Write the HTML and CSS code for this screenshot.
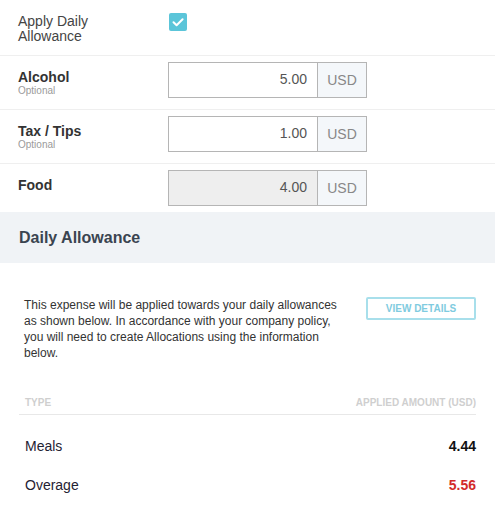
FILE: index.html
```html
<!DOCTYPE html>
<html lang="en">
<head>
<meta charset="utf-8">
<title>Daily Allowance</title>
<link rel="stylesheet" href="styles.css">
</head>
<body>
<div class="form">
  <div class="row row-check">
    <div class="lbl lbl-plain">Apply Daily<br>Allowance</div>
    <span class="checkbox">
      <svg width="18" height="18" viewBox="0 0 18 18"><rect x="0" y="0" width="18" height="18" rx="2" fill="#5bc5d9"/><polyline points="4.5,9.2 7.6,12.2 13.6,6.2" fill="none" stroke="#fff" stroke-width="2" stroke-linecap="round" stroke-linejoin="round"/></svg>
    </span>
  </div>
  <div class="row">
    <div class="lbl"><div class="lbl-title">Alcohol</div><div class="lbl-sub">Optional</div></div>
    <div class="money"><div class="amount">5.00</div><div class="cur">USD</div></div>
  </div>
  <div class="row">
    <div class="lbl"><div class="lbl-title">Tax / Tips</div><div class="lbl-sub">Optional</div></div>
    <div class="money"><div class="amount">1.00</div><div class="cur">USD</div></div>
  </div>
  <div class="row row-last">
    <div class="lbl"><div class="lbl-title">Food</div></div>
    <div class="money"><div class="amount amount-disabled">4.00</div><div class="cur">USD</div></div>
  </div>
</div>
<div class="section-head">Daily Allowance</div>
<div class="section-body">
  <div class="intro">
    <p class="intro-text">This expense will be applied towards your daily allowances as shown below. In accordance with your company policy, you will need to create Allocations using the information below.</p>
    <button class="btn-details">VIEW DETAILS</button>
  </div>
  <div class="alloc">
    <div class="alloc-head">
      <span>TYPE</span>
      <span>APPLIED AMOUNT (USD)</span>
    </div>
    <div class="alloc-row">
      <span class="alloc-type">Meals</span>
      <span class="alloc-val">4.44</span>
    </div>
    <div class="alloc-row">
      <span class="alloc-type">Overage</span>
      <span class="alloc-val alloc-over">5.56</span>
    </div>
  </div>
</div>
</body>
</html>
```
FILE: styles.css
```css
* { box-sizing: border-box; }
html, body { margin: 0; padding: 0; background: #fff; }
body {
  font-family: "Liberation Sans", Arial, sans-serif;
  color: #333;
  width: 495px;
}
.row {
  display: flex;
  align-items: flex-start;
  height: 54px;
  padding-top: 6px;
  border-bottom: 1px solid #efefef;
}
.row-check {
  height: 56px;
  padding-top: 13px;
}
.row-last {
  height: 48px;
  border-bottom: none;
}
.lbl {
  width: 168px;
  flex: none;
  padding-left: 18px;
  padding-top: 7px;
}
.lbl-plain {
  padding-top: 1px;
  font-size: 14px;
  line-height: 15px;
  color: #444;
}
.lbl-title {
  font-size: 14px;
  line-height: 16px;
  font-weight: bold;
  color: #333;
}
.lbl-sub {
  font-size: 10px;
  line-height: 11px;
  color: #9a9a9a;
}
.checkbox {
  display: block;
  width: 18px;
  height: 18px;
  margin-left: 1px;
}
.checkbox svg { display: block; }
.money {
  display: flex;
  width: 199px;
  height: 36px;
  border: 1px solid #b5b5b5;
}
.amount {
  width: 149px;
  border-right: 1px solid #b5b5b5;
  text-align: right;
  padding-right: 10px;
  font-size: 14px;
  line-height: 33px;
  color: #555;
  background: #fff;
}
.amount-disabled { background: #eeeeee; }
.cur {
  flex: 1;
  background: #f4f7fa;
  text-align: center;
  font-size: 14px;
  line-height: 34px;
  color: #888;
}
.section-head {
  height: 51px;
  background: #f0f3f6;
  padding-left: 19px;
  display: flex;
  align-items: center;
  font-size: 16px;
  font-weight: bold;
  color: #3a4450;
}
.section-body {
  padding: 34px 19px 0 19px;
}
.intro {
  display: flex;
  align-items: flex-start;
  justify-content: space-between;
  padding-left: 5px;
}
.intro-text {
  margin: 0;
  width: 322px;
  font-size: 12px;
  line-height: 16px;
  color: #333;
}
.btn-details {
  width: 110px;
  height: 23px;
  border: 2px solid #a8dfeb;
  border-radius: 2px;
  background: #fff;
  font-family: "Liberation Sans", Arial, sans-serif;
  font-size: 10px;
  font-weight: bold;
  color: #7fcbe0;
  padding: 0;
}
.alloc { margin-top: 36px; }
.alloc-head {
  display: flex;
  justify-content: space-between;
  padding: 0 0 5px 6px;
  font-size: 10px;
  line-height: 12px;
  font-weight: bold;
  color: #cfcfcf;
  border-bottom: 1px solid #e8e8e8;
}
.alloc-row {
  display: flex;
  justify-content: space-between;
  padding: 23px 0 0 6px;
  font-size: 14px;
  line-height: 16px;
}
.alloc-type { color: #1f2233; }
.alloc-val { font-weight: bold; color: #111; }
.alloc-over { color: #d22b2b; }
```
